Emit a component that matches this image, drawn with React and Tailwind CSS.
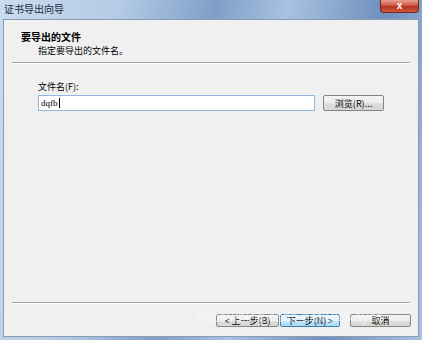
export default function App() {
  const font = { fontFamily: '"Noto Sans CJK SC", "Liberation Sans", sans-serif' };
  return (
    <div
      className="relative w-[422px] h-[340px] overflow-hidden flex flex-col bg-[linear-gradient(100deg,#c9dbef_0%,#b3cbe6_25%,#7f9fc8_45%,#a8c2e0_60%,#6f8fbd_80%,#a9c2df_100%)]"
      style={font}
    >
      {/* 标题栏 */}
      <div className="h-[19px] flex items-start justify-between pl-[4px] pr-[3px]">
        <span className="text-[10px] leading-[14px] pt-[2px] text-[#1d2a3a]">证书导出向导</span>
        <div className="w-[39px] h-[13px] rounded-b-[4px] border border-t-0 border-[#6a2a22] bg-[linear-gradient(180deg,#e8a093_0%,#cf5a47_45%,#b4321f_55%,#d4553c_100%)] flex items-center justify-center">
          <span className="text-white text-[10px] font-bold leading-none" style={{ fontFamily: '"Liberation Sans", sans-serif' }}>x</span>
        </div>
      </div>

      {/* 内容面板 */}
      <div className="flex-1 mx-[3px] mb-[3px] border border-[#8a9bb2] bg-[#f0f0f0] flex flex-col">
        <div className="h-[42px] flex flex-col pl-[17px] pt-[10px]">
          <span className="text-[10px] font-bold leading-[13px] text-black">要导出的文件</span>
          <span className="text-[9px] leading-[13px] pl-[17px] pt-px text-black">指定要导出的文件名。</span>
        </div>
        <div className="mx-[8px] h-[2px] border-t border-[#a0a0a0] border-b border-b-white" />

        <div className="flex flex-col pl-[34px] pt-[17px]">
          <span className="text-[9px] leading-[12px] text-black">文件名(F):</span>
          <div className="flex items-center gap-[8px] mt-[2px]">
            <div className="w-[277px] h-[16px] bg-white border border-[#8fb8e3] flex items-center pl-[2px]">
              <span className="text-[9px] leading-none text-black" style={{ fontFamily: '"Liberation Serif", serif' }}>dqfb</span>
              <span className="w-px h-[10px] bg-black ml-px" />
            </div>
            <button className="w-[61px] h-[16px] rounded-[2px] border border-[#858585] bg-[linear-gradient(180deg,#f4f4f4_0%,#ececec_50%,#dcdcdc_55%,#d6d6d6_100%)] text-[9px] leading-none text-black">
              浏览(R)...
            </button>
          </div>
        </div>

        <div className="flex-1" />
        <div className="mx-[8px] h-[2px] border-t border-[#a0a0a0] border-b border-b-white" />
        <div className="h-[32px] flex items-center justify-end pr-[7px]">
          <button className="w-[63px] h-[13px] rounded-[2px] border border-[#858585] bg-[linear-gradient(180deg,#f4f4f4_0%,#ececec_50%,#dcdcdc_55%,#d6d6d6_100%)] text-[9px] leading-none text-black">
            &lt; 上一步(B)
          </button>
          <button className="w-[60px] h-[13px] ml-px rounded-[2px] border border-[#3c7fb1] bg-[linear-gradient(180deg,#eaf6fd_0%,#d9f0fc_50%,#bee6fd_55%,#a7d9f5_100%)] text-[9px] leading-none text-black">
            下一步(N) &gt;
          </button>
          <button className="w-[61px] h-[13px] ml-[10px] rounded-[2px] border border-[#858585] bg-[linear-gradient(180deg,#f4f4f4_0%,#ececec_50%,#dcdcdc_55%,#d6d6d6_100%)] text-[9px] leading-none text-black">
            取消
          </button>
        </div>
      </div>

      {/* 水印 */}
      <span
        className="absolute left-[196px] top-[310px] text-[14px] leading-none text-white/50 pointer-events-none"
        style={{ fontFamily: '"Liberation Sans", sans-serif' }}
      >
        https://blog.csdn.net/BlcKayer
      </span>
    </div>
  );
}
